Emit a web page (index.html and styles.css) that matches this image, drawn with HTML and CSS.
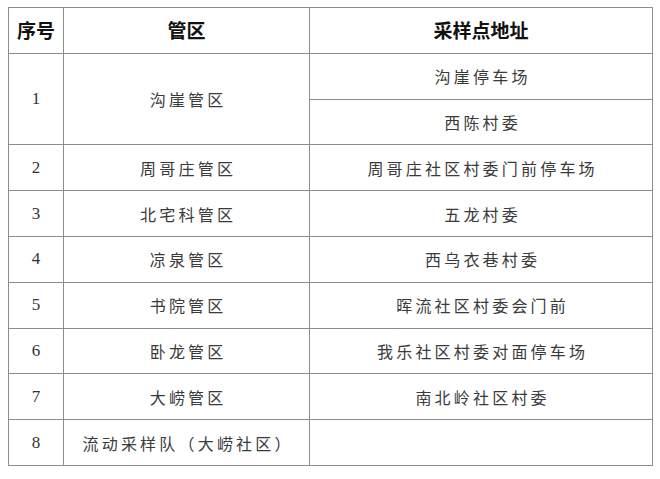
FILE: index.html
```html
<!DOCTYPE html>
<html lang="zh-CN">
<head>
<meta charset="utf-8">
<title>采样点</title>
<link rel="stylesheet" href="styles.css">
</head>
<body>
<table class="sites">
  <colgroup>
    <col class="c-no">
    <col class="c-area">
    <col class="c-addr">
  </colgroup>
  <thead>
    <tr>
      <th>序号</th>
      <th>管区</th>
      <th>采样点地址</th>
    </tr>
  </thead>
  <tbody>
    <tr>
      <td class="no" rowspan="2">1</td>
      <td rowspan="2">沟崖管区</td>
      <td>沟崖停车场</td>
    </tr>
    <tr>
      <td>西陈村委</td>
    </tr>
    <tr><td class="no">2</td><td>周哥庄管区</td><td>周哥庄社区村委门前停车场</td></tr>
    <tr><td class="no">3</td><td>北宅科管区</td><td>五龙村委</td></tr>
    <tr><td class="no">4</td><td>凉泉管区</td><td>西乌衣巷村委</td></tr>
    <tr><td class="no">5</td><td>书院管区</td><td>晖流社区村委会门前</td></tr>
    <tr><td class="no">6</td><td>卧龙管区</td><td>我乐社区村委对面停车场</td></tr>
    <tr><td class="no">7</td><td>大崂管区</td><td>南北岭社区村委</td></tr>
    <tr><td class="no">8</td><td>流动采样队（大崂社区）</td><td></td></tr>
  </tbody>
</table>
</body>
</html>
```

FILE: styles.css
```css
html, body {
  margin: 0;
  padding: 0;
  background: #ffffff;
}
body {
  padding: 7px 0 0 8px;
}
.sites {
  border-collapse: collapse;
  table-layout: fixed;
  width: 644px;
  font-family: "Noto Sans CJK SC", sans-serif;
}
.c-no { width: 55px; }
.c-area { width: 246px; }
.c-addr { width: 343px; }
.sites th,
.sites td {
  border: 1px solid #8c8c8c;
  padding: 0;
  text-align: center;
  vertical-align: middle;
  height: 45.8px;
  box-sizing: border-box;
}
.sites th {
  font-size: 19px;
  font-weight: 700;
  color: #111111;
  line-height: 20px;
}
.sites td {
  font-size: 16px;
  font-weight: 400;
  color: #3a3a3a;
  letter-spacing: 3.2px;
  line-height: 20px;
  text-indent: 3.2px;
}
.sites td.no {
  font-family: "Liberation Serif", serif;
  font-size: 17px;
  letter-spacing: 0;
  text-indent: 0;
  color: #333333;
}
```
